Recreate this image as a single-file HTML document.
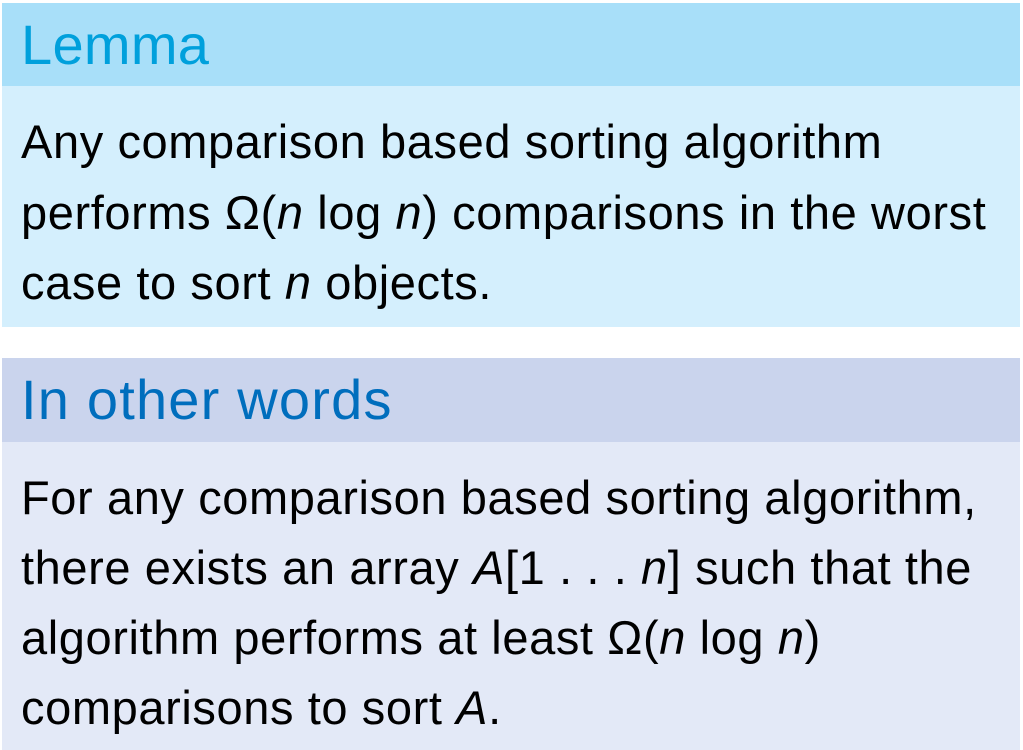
<!DOCTYPE html>
<html><head><meta charset="utf-8"><style>
html,body{margin:0;padding:0;background:#fff;width:1023px;height:750px;overflow:hidden}
body{font-family:"Liberation Sans","DejaVu Sans",sans-serif;position:relative}
.h{position:absolute;left:2px;width:1018px;height:83px;}
.b{position:absolute;left:2px;width:1018px;}
.t{position:absolute;left:21px;font-size:56px;white-space:nowrap;letter-spacing:0.3px}
.l{position:absolute;left:21px;font-size:47px;white-space:nowrap;color:#000;letter-spacing:0.6px}
i{font-style:italic}
</style></head><body>
<div class="h" style="top:3px;background:#a8dff9"></div>
<div class="b" style="top:86px;height:241px;background:#d4effd"></div>
<div class="t" style="top:12px;color:#00a0dc">Lemma</div>
<div class="l" style="top:114px">Any comparison based sorting algorithm</div>
<div class="l" style="top:185px">performs Ω(<i>n</i> log <i>n</i>) comparisons in the worst</div>
<div class="l" style="top:255px">case to sort <i>n</i> objects.</div>

<div class="h" style="top:358px;height:84px;background:#cad4ed"></div>
<div class="b" style="top:442px;height:308px;background:#e3e9f7"></div>
<div class="t" style="top:367px;color:#006ebd;letter-spacing:1.2px">In other words</div>
<div class="l" style="top:470px">For any comparison based sorting algorithm,</div>
<div class="l" style="top:540px">there exists an array <i>A</i>[1 . . . <i>n</i>] such that the</div>
<div class="l" style="top:610px">algorithm performs at least Ω(<i>n</i> log <i>n</i>)</div>
<div class="l" style="top:680px">comparisons to sort <i>A</i>.</div>
</body></html>
